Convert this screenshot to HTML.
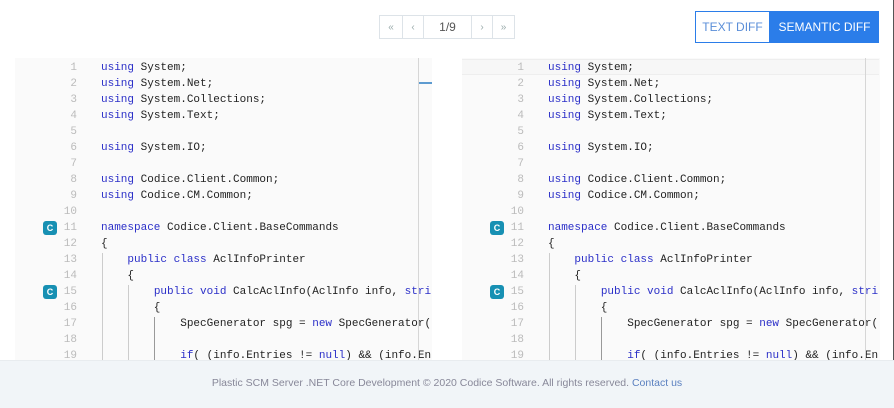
<!DOCTYPE html>
<html><head><meta charset="utf-8"><style>
*{margin:0;padding:0;box-sizing:border-box}
body{width:894px;height:408px;overflow:hidden;background:#fff;font-family:"Liberation Sans",sans-serif;position:relative}
.pg{position:absolute;left:379px;top:15px;height:24px;display:flex;border:1px solid #dde3e8}
.pg div{border-right:1px solid #dde3e8;color:#9aa;font-size:10px;display:flex;align-items:center;justify-content:center;height:22px}
.pg div:last-child{border-right:none}
.tg{position:absolute;left:695px;top:11px;width:184px;height:32px;display:flex;font-size:12px}
.tg .a{width:75px;border:1px solid #2b7de9;color:#5a8ed8;display:flex;align-items:center;justify-content:center}
.tg .b{flex:1;background:#2b7de9;color:#fff;display:flex;align-items:center;justify-content:center}
.panel{position:absolute;top:58px;height:302px;background:#fafafa;overflow:hidden}
.ln{position:absolute;height:16px;font-family:"Liberation Mono",monospace;font-size:11px;line-height:16px;white-space:pre;color:#222}
.num{position:absolute;width:30px;text-align:right;font-family:"Liberation Mono",monospace;font-size:11px;line-height:16px;color:#bbb}
.k{color:#2b2fc8}
.badge{position:absolute;width:14px;height:14px;background:#1790b3;color:#fff;border-radius:3px;font-size:9px;font-weight:bold;text-align:center;line-height:14px}
.guide{position:absolute;width:1px;background:#ccc}
.div{position:absolute;top:0;height:302px;width:1px;background:#d6d6d6}
.foot{position:absolute;left:0;top:360px;width:894px;height:48px;background:#f1f5f8;border-top:1px solid #e8ecef;text-align:center;font-size:10.5px;color:#889;line-height:44px}
.foot a{color:#5b80c0}
</style></head><body>
<div class="pg"><div style="width:23px">«</div><div style="width:21px">‹</div><div style="width:48px;color:#555;font-size:12px">1/9</div><div style="width:21px">›</div><div style="width:21px">»</div></div>
<div class="tg"><div class="a">TEXT DIFF</div><div class="b">SEMANTIC DIFF</div></div>

<div class="panel" id="L" style="left:15px;width:417px"></div>
<div class="panel" id="R" style="left:462px;width:418px"></div>
<div style="position:absolute;left:893px;top:0;width:1px;height:360px;background:#555"></div>
<div class="foot">Plastic SCM Server .NET Core Development © 2020 Codice Software. All rights reserved. <a>Contact us</a></div>
<script>
var lines=[
'<span class="k">using</span> System;','<span class="k">using</span> System.Net;','<span class="k">using</span> System.Collections;','<span class="k">using</span> System.Text;','',
'<span class="k">using</span> System.IO;','','<span class="k">using</span> Codice.Client.Common;','<span class="k">using</span> Codice.CM.Common;','',
'<span class="k">namespace</span> Codice.Client.BaseCommands','{','    <span class="k">public class</span> AclInfoPrinter','    {',
'        <span class="k">public void</span> CalcAclInfo(AclInfo info, <span class="k">string</span> x)','        {',
'            SpecGenerator spg = <span class="k">new</span> SpecGenerator(','',
'            <span class="k">if</span>( (info.Entries != <span class="k">null</span>) &amp;&amp; (info.Entries.Count'];
function fill(id,right){
 var p=document.getElementById(id),h='';
 if(right)h+='<div style="position:absolute;left:0;top:1px;width:418px;height:16px;border-top:1px solid #eee;border-bottom:1px solid #eee;background:#f7f7f7"></div>';
 for(var i=0;i<19;i++){var y=i*16+1;
  h+='<div class="num" style="left:32px;top:'+(y+1)+'px">'+(i+1)+'</div>';
  h+='<div class="ln" style="left:86px;top:'+(y+1)+'px">'+lines[i]+'</div>';
  if(i==10||i==14)h+='<div class="badge" style="left:28px;top:'+(y+2)+'px">C</div>';
 }
 h+='<div class="guide" style="left:87px;top:195px;height:110px"></div>';
 h+='<div class="guide" style="left:113px;top:227px;height:80px"></div>';
 h+='<div class="guide" style="left:139px;top:259px;height:50px;background:#999"></div>';
 h+='<div style="position:absolute;left:417px;top:0;width:14px;height:302px;background:#fafafa"></div>';
 h+='<div class="div" style="left:403px"></div>';
 if(!right)h+='<div style="position:absolute;left:404px;top:24px;width:13px;height:2px;background:#5d9bd0"></div>';
 p.innerHTML=h;
}
fill('L',false);fill('R',true);
</script>
</body></html>
